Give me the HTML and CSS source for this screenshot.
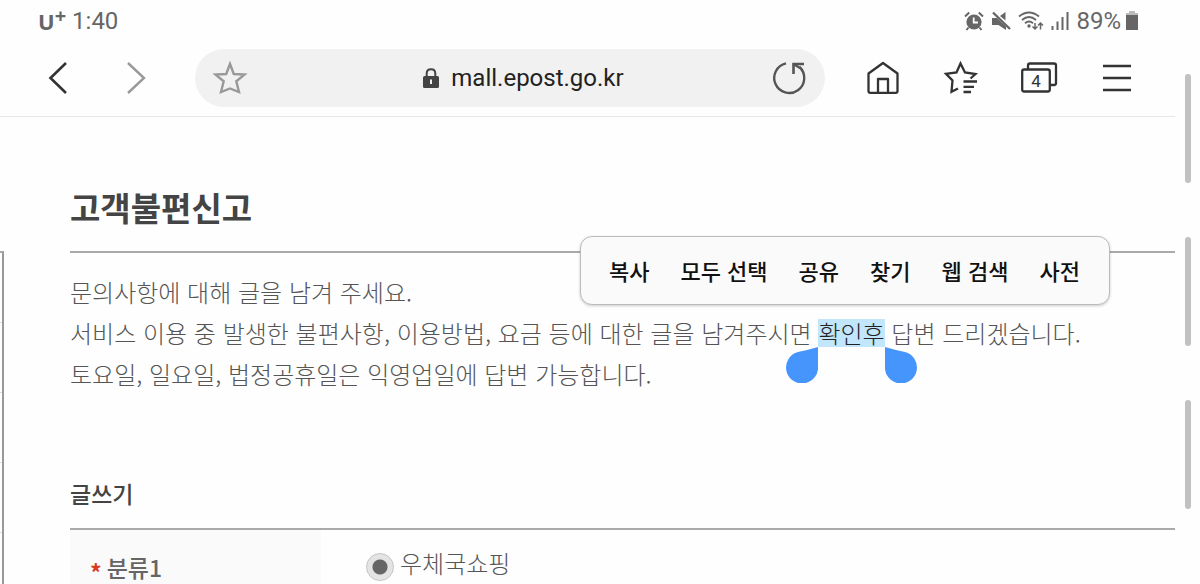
FILE: index.html
```html
<!DOCTYPE html>
<html lang="ko">
<head>
<meta charset="utf-8">
<meta name="viewport" content="width=device-width, initial-scale=1">
<title>고객불편신고</title>
<link rel="stylesheet" href="styles.css">
</head>
<body>
<div class="screen">
  <div class="browser">
    <header class="chrome">
      <div class="status">
        <div class="status-left"><span class="carrier">U<sup>+</sup></span><time>1:40</time></div>
        <div class="status-right">
          <svg width="20" height="20" viewBox="0 0 20 20" aria-hidden="true"><circle cx="10" cy="11" r="7.600" fill="#666"/><path d="M1 5.500L5.200 1.500M19 5.500L14.800 1.500M4.500 16.500L2.500 19M15.500 16.500L17.500 19" stroke="#666" stroke-width="2" fill="none"/><path d="M9.700 6.500V11.500H14" stroke="#fff" stroke-width="1.800" fill="none"/></svg>
          <svg width="20" height="20" viewBox="0 0 20 20" aria-hidden="true"><path d="M1 7H6L15 15.500V19L7.500 14H1ZM9 5L14.500 1V9.500Z" fill="#666"/><path d="M2 1.500L19 18" stroke="#666" stroke-width="2.400"/></svg>
          <svg width="26" height="20" viewBox="0 0 26 20" aria-hidden="true"><path d="M1 5.500Q11 -2.500 21 5.500M4 9Q11 3 18 9M7 12.200Q11 8.800 15 12.200" fill="none" stroke="#666" stroke-width="1.900"/><circle cx="11" cy="15" r="1.700" fill="#666"/><path d="M17 12V18M14.500 15.500L17 18L19.500 15.500M22.500 18.500V12M20 14.500L22.500 12L25 14.500" fill="none" stroke="#666" stroke-width="1.500"/></svg>
          <svg width="18" height="20" viewBox="0 0 18 20" aria-hidden="true"><path d="M1.500 15V19M6.500 10.500V19M11.500 6V19M16.500 1V19" stroke="#666" stroke-width="2"/></svg>
          <span>89%</span>
          <svg class="battery" width="14" height="20" viewBox="0 0 14 20" aria-hidden="true"><path d="M4 0H10V2H13V5H1V2H4Z" fill="#bbb"/><path d="M1 4H13V19H1Z" fill="#666"/></svg>
        </div>
      </div>
      <nav class="toolbar" aria-label="브라우저">
        <button class="tool" aria-label="뒤로"><svg width="36" height="36" viewBox="0 0 36 36"><path d="M25 3L9.500 18L25 33" fill="none" stroke="#333" stroke-width="2.600"/></svg></button>
        <button class="tool" aria-label="앞으로"><svg width="36" height="36" viewBox="0 0 36 36"><path d="M9 3L25 18L9 33" fill="none" stroke="#999" stroke-width="2.400"/></svg></button>
        <div class="address">
          <button class="round" aria-label="즐겨찾기 추가"><svg width="36" height="36" viewBox="0 0 36 36"><path d="M18 4L21.800 14L32.500 14.600L24.300 21.300L27 32L18 28.500L9 32L11.700 21.300L3.500 14.600L14.200 14Z" fill="none" stroke="#999" stroke-width="2.400"/></svg></button>
          <a class="url" href="#"><svg width="16" height="20" viewBox="0 0 16 20" aria-hidden="true"><path d="M3.700 9V5.500Q3.700 1.200 8 1.200T12.300 5.500V9" fill="none" stroke="#444" stroke-width="2"/><rect y="8" width="16" height="12" rx="1.500" fill="#444"/><path d="M8 11.500V16" stroke="#f1f1f1" stroke-width="2"/></svg><span>mall.epost.go.kr</span></a>
          <button class="round" aria-label="새로고침"><svg width="36" height="36" viewBox="0 0 36 36"><path d="M15 3.300A15 15 0 1 0 28.500 7" fill="none" stroke="#555" stroke-width="2.400"/><path d="M22.500 14V4H33" fill="none" stroke="#555" stroke-width="2.600"/><path d="M22.500 4L29 8" stroke="#555" stroke-width="2.400"/></svg></button>
        </div>
        <button class="tool" aria-label="홈"><svg width="36" height="36" viewBox="0 0 36 36"><path d="M3.500 13.500L18 3L32.500 13.500V31Q32.500 32.800 30.700 32.800H5.300Q3.500 32.800 3.500 31ZM13 32V19H23V32" fill="none" stroke="#333" stroke-width="2.300" stroke-linejoin="round"/></svg></button>
        <button class="tool" aria-label="즐겨찾기"><svg width="36" height="36" viewBox="0 0 36 36"><path d="M15 28.500L8.500 31.800L9.500 20.500L3 13.800L13.500 12.500L17.500 3.500L22 12.500L32.500 14L27.500 18.500" fill="none" stroke="#333" stroke-width="2.300"/><path d="M20.500 21.500H34M20.500 26.800H31M20.500 32H28" stroke="#333" stroke-width="2.300"/></svg></button>
        <button class="tool" aria-label="탭 4개"><svg width="38" height="36" viewBox="0 0 38 36"><path d="M8 9V5.500Q8 3.500 10 3.500H34Q36 3.500 36 5.500V23Q36 25 34 25H31" fill="none" stroke="#333" stroke-width="2.300"/><rect x="2.200" y="9.500" width="27.600" height="22" rx="2" fill="none" stroke="#333" stroke-width="2.300"/><text class="count" x="16" y="27" text-anchor="middle">4</text></svg></button>
        <button class="tool" aria-label="메뉴"><svg width="36" height="36" viewBox="0 0 36 36"><path d="M4 6H32M4 18H32M4 30H32" stroke="#333" stroke-width="2.400"/></svg></button>
      </nav>
    </header>
    <div class="body">
      <div class="side" aria-hidden="true"><i></i><i></i><i></i><i></i><i></i></div>
      <main class="content">
        <h1>고객불편신고</h1>
        <section class="notice">
          <p>문의사항에 대해 글을 남겨 주세요.</p>
          <p>서비스 이용 중 발생한 불편사항, 이용방법, 요금 등에 대한 글을 남겨주시면 <mark>확인후<svg class="handle start" width="32" height="36" viewBox="0 0 32 36" aria-hidden="true"><path d="M32 0V19A16 16 0 1 1 12 5Q22 3 32 0Z" fill="#4595fc"/></svg><svg class="handle end" width="32" height="36" viewBox="0 0 32 36" aria-hidden="true"><path d="M0 0V19A16 16 0 1 0 20 5Q10 3 0 0Z" fill="#4595fc"/></svg></mark> 답변 드리겠습니다.</p>
          <p>토요일, 일요일, 법정공휴일은 익영업일에 답변 가능합니다.</p>
          <div class="popup" role="toolbar"><button>복사</button><button>모두 선택</button><button>공유</button><button>찾기</button><button>웹 검색</button><button>사전</button></div>
        </section>
        <h2>글쓰기</h2>
        <form class="row">
          <div class="label"><b>*</b><span>분류1</span></div>
          <div class="field"><input type="radio" id="mall" name="kind" checked><label for="mall">우체국쇼핑</label></div>
        </form>
      </main>
    </div>
  </div>
  <div class="rail" aria-hidden="true"><i></i><i></i><i></i></div>
</div>
</body>
</html>
```
FILE: styles.css
```css
* { box-sizing: border-box; }
body { margin: 0; background: #fefefe; color: #555; font-family: "Noto Sans CJK KR", sans-serif; }
button { border: 0; padding: 0; background: none; color: inherit; font: inherit; }
svg { display: block; flex: none; }
h1, h2, p { margin: 0; }
.screen { display: flex; height: 100vh; overflow: hidden; }
.browser { flex: 1; min-width: 0; }
.rail { width: 25px; padding: 74px 0 0 10px; display: flex; flex-direction: column; gap: 54px; }
.rail i { flex: none; width: 6px; height: 109px; border-radius: 3px; background: #c1c1c1; }

.chrome { height: 117px; border-bottom: 1px solid #e6e6e6; font-family: Roboto, sans-serif; }
.status { height: 40px; padding: 2px 36px 0 38px; display: flex; justify-content: space-between; align-items: center; font-size: 24px; font-weight: 400; color: #666; }
.status-left, .status-right { display: flex; align-items: center; }
.status-left { gap: 6px; }
.status-right { gap: 7px; }
.battery { margin-left: -3px; }
.carrier { display: flex; font-family: "Open Sans", sans-serif; font-size: 22px; font-weight: 700; line-height: 30px; }
.carrier sup { font-size: 20px; line-height: 20px; vertical-align: top; }
.toolbar { display: flex; align-items: center; padding: 9px 19px 9px 20px; }
.tool { width: 78px; height: 58px; display: flex; align-items: center; justify-content: center; }
.count { font-size: 17px; fill: #333; }
.address { flex: 1; height: 58px; margin: 0 19px; padding: 0 18px 0 17px; border-radius: 29px; background: #f1f1f1; display: flex; align-items: center; justify-content: space-between; }
.url { display: flex; align-items: center; gap: 12px; margin-left: 28px; color: #222; font-size: 24px; line-height: 30px; text-decoration: none; }

.body { display: flex; }
.side { width: 4px; margin-top: 134px; border-top: 2px solid #aaa; border-right: 2px solid #999; }
.side i { display: block; height: 70px; border-bottom: 1px solid #ddd; }
.content { flex: 1; min-width: 0; padding: 58px 0 0 66px; }
h1 { height: 76px; font-size: 33px; line-height: 64px; font-weight: 700; color: #444; }
.notice { position: relative; padding: 18px 0 0; border-top: 2px solid #aaa; font-size: 24px; line-height: 41px; font-weight: 300; }
mark { position: relative; display: inline-block; line-height: 28px; background: #c2e6fb; color: #222; }
.handle { position: absolute; top: 28px; }
.start { right: 100%; }
.end { left: 100%; }
.popup { position: absolute; top: -17px; right: 65px; width: 530px; height: 69px; padding: 0 29px 2px 28px; display: flex; justify-content: space-between; align-items: center; background: #fafafa; border: 1px solid #bbb; border-radius: 12px; box-shadow: 0 1px 3px #0003; color: #111; font-size: 22px; line-height: 32px; font-weight: 500; }
h2 { margin-top: 78px; height: 56px; font-size: 23px; line-height: 42px; font-weight: 500; color: #444; }
.row { display: grid; grid-template-columns: 251px 1fr; height: 80px; border-top: 2px solid #aaa; font-size: 24px; line-height: 34px; }
.label { display: flex; gap: 5px; padding: 20px; background: #fafafa; color: #666; font-size: 23px; font-weight: 500; }
.label b { padding-top: 10px; line-height: 24px; color: #d93a20; }
.field { display: flex; align-items: flex-start; gap: 6px; padding: 16px 0 0 45px; font-weight: 300; }
.field input { appearance: none; width: 28px; height: 28px; margin: 7px 0 0; border: 1px solid #c4c4c4; border-radius: 50%; background: radial-gradient(circle, #666 0 7px, #e4e4e4 8px); }
```
